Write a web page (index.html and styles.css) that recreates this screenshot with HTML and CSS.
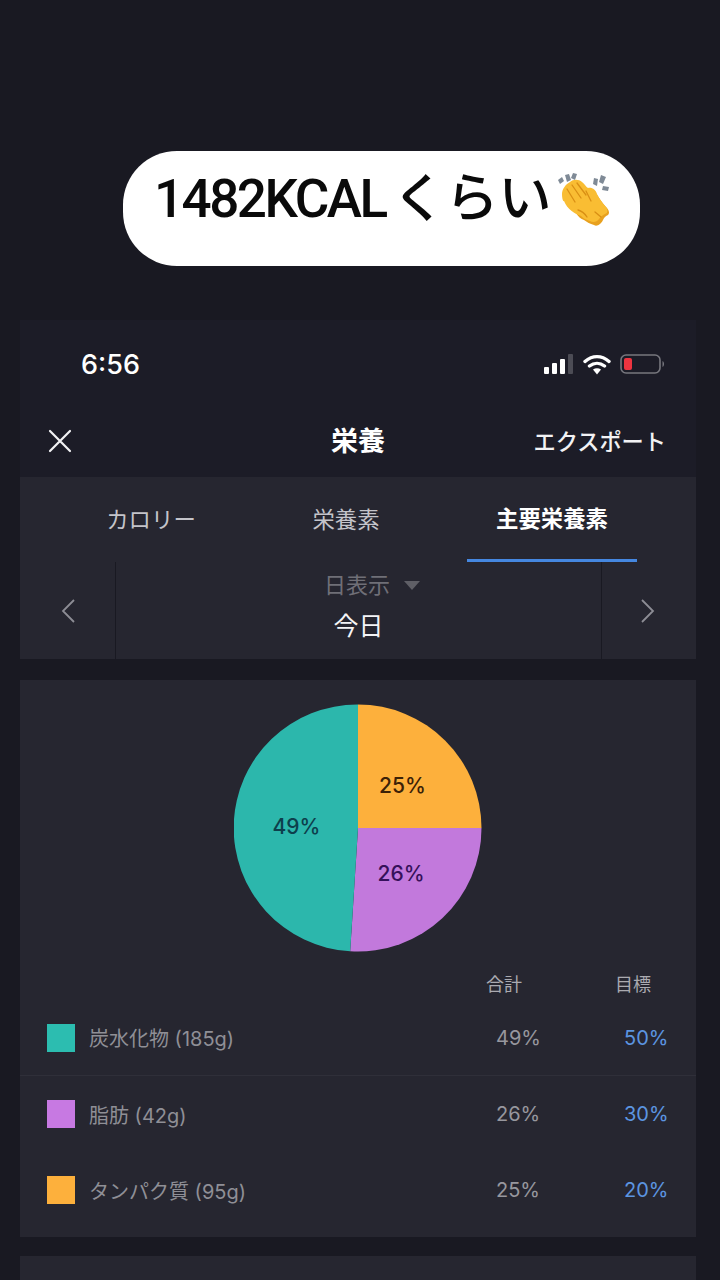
FILE: index.html
```html
<!DOCTYPE html>
<html lang="ja">
<head>
  <meta charset="UTF-8" />
  <title>栄養</title>
  <link rel="stylesheet" href="styles.css">
</head>
<body>
  <div class="caption-area">
    <div class="caption">
      <span class="caption-text">1482KCAL<span class="caption-kana">くらい</span></span>
      <svg class="clap" width="54" height="56" viewBox="0 0 54 56" aria-hidden="true">
        <g fill="#7f8a96">
          <path d="M0 8l4-3 2 4-4 3z"/>
          <path d="M7 3l4-1 2 6-4 2z"/>
          <path d="M15 1l4 1-2 6-4-2z"/>
          <path d="M36 6l4 1-1 7-4-2z"/>
          <path d="M43 3l5 2-3 7-4-2z"/>
          <path d="M45 14l6 1-1 4-6-1z"/>
        </g>
        <path fill="#e8a11f" d="M14 24C20 20 30 17 36 19c3 3 6 9 12 16 3 3 4 6 2 8-3 1-4 3-5 5-2 4-6 7-9 5-4-1-7-3-10-5-6-2-12-10-12-24z"/>
        <path fill="#f9bd33" d="M4 22C4 17 8 12 12 10c3-3 9-3 12 0 3 2 4 5 6 6 4-1 8 2 9 6 2 4 5 9 9 13 2 3 2 6-1 7-3 1-4 3-6 5-2 3-6 4-9 2-4-1-7-3-9-5-6-2-14-7-17-15C5 30 4 26 4 22z"/>
        <path fill="none" stroke="#d98f14" stroke-width="1.300" stroke-linecap="round" d="M9 17l8 13M14 13l9 13M19 11l9 12M28 19l5 10M20 38c4 1 7 4 9 7M37 40l6 5"/>
      </svg>
    </div>
  </div>

  <div class="screen">
    <div class="top-dark">
      <div class="status-bar">
        <span class="time">6:56</span>
        <div class="status-icons">
          <svg class="signal" width="30" height="20" viewBox="0 0 30 20" aria-hidden="true">
            <rect x="0" y="13" width="5" height="7" rx="1" fill="#fff"/>
            <rect x="8" y="9" width="5" height="11" rx="1" fill="#fff"/>
            <rect x="16" y="5" width="5" height="15" rx="1" fill="#fff"/>
            <rect x="24" y="0" width="5" height="20" rx="1" fill="#4c4c55"/>
          </svg>
          <svg class="wifi" width="28" height="21" viewBox="0 0 28 21" aria-hidden="true">
            <path d="M2 7.500C9.500 1 18.500 1 26 7.500M6.500 12C11 8.500 17 8.500 21.500 12" fill="none" stroke="#fff" stroke-width="3.400" stroke-linecap="round"/>
            <path d="M10 15.500c2.500-1.800 5.500-1.800 8 0L14 20.500z" fill="#fff"/>
          </svg>
          <svg class="battery" width="46" height="22" viewBox="0 0 46 22" aria-hidden="true">
            <rect x="1" y="2" width="39" height="18" rx="5" fill="none" stroke="#77777e" stroke-width="1.600"/>
            <rect x="4" y="5" width="8" height="12" rx="2" fill="#ee3440"/>
            <path d="M42.500 8c2 .8 2 5.200 0 6z" fill="#77777e"/>
          </svg>
        </div>
      </div>
      <div class="nav-bar">
        <svg class="close" width="24" height="24" viewBox="0 0 24 24" aria-hidden="true">
          <path d="M2 2l20 20M22 2L2 22" stroke="#f2f2f4" stroke-width="2.200" stroke-linecap="round"/>
        </svg>
        <span class="nav-title">栄養</span>
        <span class="nav-action">エクスポート</span>
      </div>
    </div>

    <div class="tabs">
      <div class="tab">カロリー</div>
      <div class="tab">栄養素</div>
      <div class="tab tab-active">主要栄養素</div>
    </div>

    <div class="date-row">
      <div class="date-arrow date-prev">
        <svg width="14" height="24" viewBox="0 0 14 24" aria-hidden="true"><path d="M13 1L2 12l11 11" fill="none" stroke="#8d8d95" stroke-width="1.800"/></svg>
      </div>
      <div class="date-center">
        <div class="date-mode">日表示<span class="caret"></span></div>
        <div class="date-value">今日</div>
      </div>
      <div class="date-arrow date-next">
        <svg width="14" height="24" viewBox="0 0 14 24" aria-hidden="true"><path d="M1 1l11 11L1 23" fill="none" stroke="#8d8d95" stroke-width="1.800"/></svg>
      </div>
    </div>

    <div class="card">
      <div class="pie-wrap">
        <svg class="pie" width="248" height="248" viewBox="0 0 248 248">
          <path d="M124 124V.5A123.500 123.500 0 0 1 247.500 124z" fill="#fdb03c"/>
          <path d="M124 124h123.500A123.500 123.500 0 0 1 116.200 247.300z" fill="#c279dc"/>
          <path d="M124 124l-7.800 123.300A123.500 123.500 0 0 1 124 .5z" fill="#2cb7ac"/>
          <text class="pie-label" x="168.500" y="81" fill="#3b2107">25%</text>
          <text class="pie-label" x="167" y="169.500" fill="#35105a">26%</text>
          <text class="pie-label" x="62.500" y="122.500" fill="#0d3f4c">49%</text>
        </svg>
      </div>

      <div class="table-head">
        <span class="col-total">合計</span>
        <span class="col-goal">目標</span>
      </div>

      <div class="macro-row macro-row-line">
        <span class="swatch swatch-carb"></span>
        <span class="macro-name">炭水化物 (185g)</span>
        <span class="col-total">49%</span>
        <span class="col-goal goal-value">50%</span>
      </div>
      <div class="macro-row">
        <span class="swatch swatch-fat"></span>
        <span class="macro-name">脂肪 (42g)</span>
        <span class="col-total">26%</span>
        <span class="col-goal goal-value">30%</span>
      </div>
      <div class="macro-row">
        <span class="swatch swatch-protein"></span>
        <span class="macro-name">タンパク質 (95g)</span>
        <span class="col-total">25%</span>
        <span class="col-goal goal-value">20%</span>
      </div>
    </div>

    <div class="card card-next"></div>
  </div>
</body>
</html>
```

FILE: styles.css
```css
* { box-sizing: border-box; }
html, body { height: 100%; }
body {
  margin: 0;
  height: 1280px;
  overflow: hidden;
  background: #191922;
  color: #fff;
  font-family: Roboto, "Noto Sans CJK JP", sans-serif;
}

/* caption sticker */
.caption-area { display: flex; padding: 151px 0 54px 123px; }
.caption {
  display: flex;
  align-items: flex-start;
  width: 517px;
  height: 115px;
  padding: 12px 0 0 31px;
  background: #fff;
  border-radius: 54px;
  color: #0a0a0a;
}
.caption-text { width: 404px; font-size: 53px; line-height: 72px; font-weight: 500; letter-spacing: -2.500px; white-space: nowrap; }
.caption-kana { margin-left: 7px; font-size: 53px; letter-spacing: 0; }
.clap { margin-top: 9px; flex: none; }

/* phone screen */
.screen { margin: 0 24px 0 20px; }
.top-dark { background: #1c1c27; height: 157px; }
.status-bar { display: flex; align-items: center; justify-content: space-between; height: 88px; padding: 0 30px 0 61px; }
.time { font-size: 27px; font-weight: 500; font-family: Inter, Roboto, sans-serif; }
.status-icons { display: flex; align-items: center; gap: 9px; }
.nav-bar { position: relative; display: flex; align-items: center; justify-content: space-between; height: 66px; padding: 0 30px 0 28px; }
.nav-title { position: absolute; left: 0; right: 0; top: 16px; text-align: center; font-size: 27px; line-height: 36px; font-weight: 700; }
.nav-action { margin-top: -3px; font-size: 22.200px; font-weight: 500; color: #f2f2f4; }

.tabs {
  display: grid;
  grid-template-columns: 180px 210px 170px;
  height: 85px;
  padding-left: 41px;
  background: #262630;
  font-size: 22.400px;
  color: #c4c4ca;
}
.tab { display: flex; align-items: center; justify-content: center; height: 85px; padding-bottom: 3px; }
.tab-active { margin-left: 16px; width: 170px; color: #fff; font-weight: 700; border-bottom: 3px solid #4587e0; }

.date-row { display: flex; height: 97px; background: #262630; }
.date-arrow { display: flex; align-items: center; justify-content: center; width: 96px; }
.date-prev { border-right: 1px solid #191922; }
.date-next { border-left: 1px solid #191922; width: 95px; padding-right: 2px; }
.date-center { flex: 1; text-align: center; }
.date-mode { display: flex; align-items: center; justify-content: center; height: 46px; padding: 0 0 4px 27px; font-size: 22px; color: #6f6f77; }
.caret { margin: 4px 0 0 14px; width: 0; height: 0; border-left: 8px solid transparent; border-right: 8px solid transparent; border-top: 9px solid #5f5f66; }
.date-value { font-size: 25px; line-height: 38px; color: #f4f4f6; }

.card { margin-top: 21px; height: 557px; background: #262630; }
.card-next { margin-top: 19px; height: 24px; }
.pie-wrap { display: flex; justify-content: center; height: 271px; padding-top: 24px; }
.pie-label { font-family: Inter, Roboto, sans-serif; font-size: 21px; font-weight: 500; text-anchor: middle; dominant-baseline: central; }

.table-head { display: flex; align-items: center; justify-content: flex-end; height: 49px; padding: 14px 33px 0 0; font-size: 18px; color: #aaaab0; }
.table-head .col-total { width: 60px; margin-right: 69px; text-align: center; }
.table-head .col-goal { width: 60px; text-align: center; }

.macro-row { display: flex; align-items: center; height: 76px; padding: 0 28px 0 27px; font-size: 20px; color: #8f8f96; }
.macro-row-line { border-bottom: 1px solid #2f2f39; }
.swatch { width: 28px; height: 28px; margin-right: 14px; flex: none; }
.swatch-carb { background: #2cbdb0; }
.swatch-fat { background: #c779e2; }
.swatch-protein { background: #fdb03c; }
.macro-name { flex: 1; white-space: nowrap; font-family: Inter, "Noto Sans CJK JP", sans-serif; }
.macro-row .col-total { width: 60px; margin-right: 68px; font-family: Inter, Roboto, sans-serif; color: #97979e; }
.macro-row .col-goal { width: 44px; text-align: right; font-family: Inter, Roboto, sans-serif; }
.goal-value { color: #5c95e0; }
```
